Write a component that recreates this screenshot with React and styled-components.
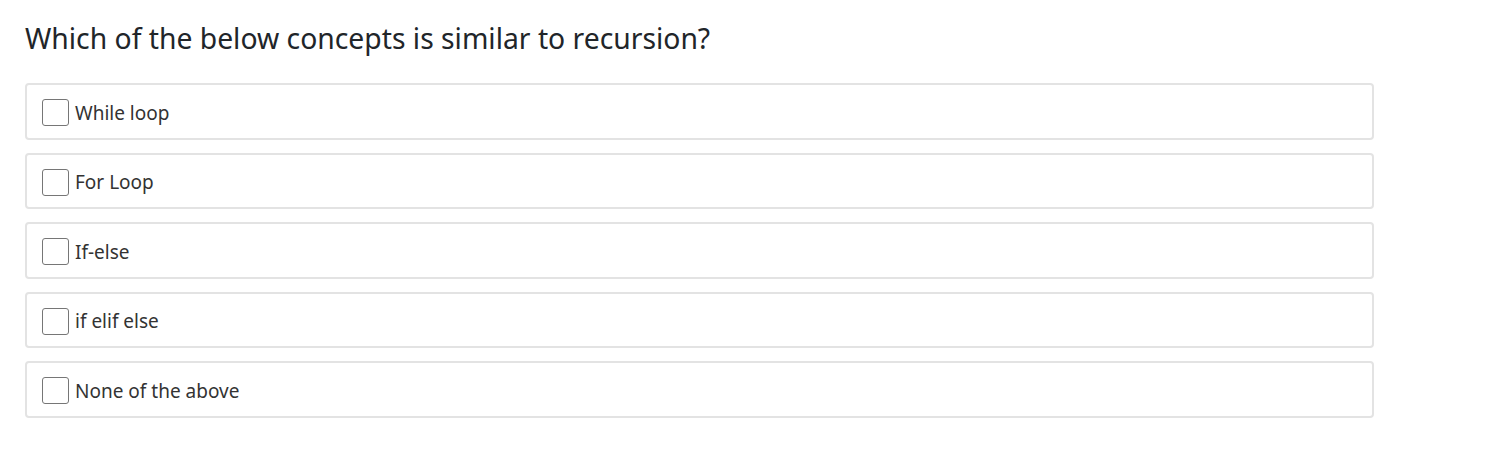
import React from "react";
import styled, { createGlobalStyle } from "styled-components";

const Global = createGlobalStyle`
  html, body { margin: 0; padding: 0; background: #fff; }
  body { font-family: "Noto Sans", "Open Sans", sans-serif; color: #212529; }
`;

const Page = styled.div`
  padding: 18px 123px 0 25px;
`;

const Title = styled.h2`
  margin: 0 0 25px;
  font-size: 28.3px;
  font-weight: 400;
  line-height: 40px;
  color: #212529;
`;

const List = styled.div`
  display: flex;
  flex-direction: column;
  gap: 13px;
`;

const Option = styled.label`
  box-sizing: border-box;
  display: flex;
  align-items: center;
  height: 56.5px;
  padding: 3px 15px 0;
  border: 2px solid #e3e3e3;
  border-radius: 4px;
  background: #fff;
  cursor: pointer;
`;

const Box = styled.input.attrs({ type: "checkbox" })`
  appearance: none;
  margin: 0 6px 0 0;
  width: 27px;
  height: 27px;
  border: 1px solid #767676;
  border-radius: 3px;
  background: #fff;
  flex: none;
`;

const Text = styled.span`
  font-size: 19px;
  color: #333;
`;

const options = ["While loop", "For Loop", "If-else", "if elif else", "None of the above"];

export default function App() {
  return (
    <>
      <Global />
      <Page>
        <Title>Which of the below concepts is similar to recursion?</Title>
        <List>
          {options.map((o) => (
            <Option key={o}>
              <Box />
              <Text>{o}</Text>
            </Option>
          ))}
        </List>
      </Page>
    </>
  );
}
